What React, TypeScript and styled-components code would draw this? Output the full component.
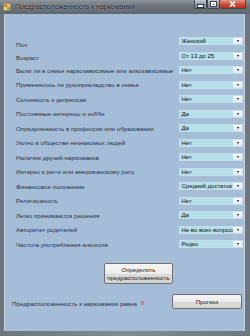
import React from 'react';
import styled, { createGlobalStyle } from 'styled-components';

const GlobalStyle = createGlobalStyle`
  html, body {
    margin: 0;
    padding: 0;
  }

  body {
    width: 250px;
    height: 336px;
    overflow: hidden;
    font-family: 'Liberation Sans', Arial, sans-serif;
  }
`;

interface Question {
  label: string;
  value: string;
  nudge?: number;
}

const questions: Question[] = [
  { label: 'Пол', value: 'Женский', nudge: 3.5 },
  { label: 'Возраст', value: 'От 13 до 25', nudge: 2 },
  { label: 'Были ли в семье наркозависимые или алкозависимые', value: 'Нет' },
  { label: 'Применялось ли рукоприкладство в семье', value: 'Нет' },
  { label: 'Склонность к депрессии', value: 'Нет' },
  { label: 'Постоянные интересы и хобби', value: 'Да' },
  { label: 'Определенность в профессии или образовании', value: 'Да' },
  { label: 'Уютно в обществе незнакомых людей', value: 'Нет' },
  { label: 'Наличие друзей-наркоманов', value: 'Нет' },
  { label: 'Интерес к регги или американскому рэпу', value: 'Нет' },
  { label: 'Финансовое положение', value: 'Средний достаток' },
  { label: 'Религиозность', value: 'Нет' },
  { label: 'Легко принимаются решения', value: 'Да' },
  { label: 'Авторитет родителей', value: 'Не во всех вопросах' },
  { label: 'Частота употребления алкоголя', value: 'Редко' },
];

const App = () => {
  return (
    <>
      <GlobalStyle />
      <Window>
        <TitleBar>
          <AppIcon viewBox='0 0 8 8'>
            <rect x='0.5' y='0.5' width='7' height='7' fill='#f3d36b' stroke='#9a7a2a' strokeWidth='0.6' />
            <rect x='1.5' y='1.5' width='2.5' height='2.5' fill='#e05a3a' />
            <rect x='4.2' y='4.2' width='2.5' height='2.5' fill='#4a8fd8' />
          </AppIcon>
          <Title>Предрасположенность к наркомании</Title>
          <Controls>
            <CaptionButton>
              <MinGlyph />
            </CaptionButton>
            <CaptionButton>
              <MaxGlyph />
            </CaptionButton>
            <CaptionButton close>
              <svg width='7' height='6' viewBox='0 0 7 6'>
                <path d='M1 0.5 L6 5.5 M6 0.5 L1 5.5' stroke='#fff' strokeWidth='1.6' />
              </svg>
            </CaptionButton>
          </Controls>
        </TitleBar>
        <Frame>
          <Client>
            <Form>
              {questions.map((q) => (
                <React.Fragment key={q.label}>
                  <Label nudge={q.nudge}>{q.label}</Label>
                  <Combo>
                    <ComboText>{q.value}</ComboText>
                    <ComboArrow />
                  </Combo>
                </React.Fragment>
              ))}
            </Form>
            <ActionRow>
              <PushButton width={69} height={21}>
                Определить
                <br />
                предрасположенность
              </PushButton>
            </ActionRow>
            <ResultRow>
              <ResultLabel>Предрасположенность к наркомании равна</ResultLabel>
              <ResultValue>0</ResultValue>
              <PushButton width={70} height={15} push>
                Прогноз
              </PushButton>
            </ResultRow>
          </Client>
        </Frame>
      </Window>
    </>
  );
};

export default App;

const Window = styled.div`
  display: flex;
  flex-direction: column;

  width: 250px;
  height: 336px;

  background: linear-gradient(90deg, #6c747d 0%, #838b94 50%, #6d757e 100%);
`;

const TitleBar = styled.div`
  display: flex;
  align-items: flex-start;

  height: 14px;

  background: linear-gradient(180deg, #8e959d 0%, #6c737b 45%, #5f676f 100%);
`;

const AppIcon = styled.svg`
  width: 8px;
  height: 8px;

  margin: 3px 0 0 3px;
`;

const Title = styled.div`
  margin: 3px 0 0 4px;

  color: #1c2026;
  font-size: 7px;
  line-height: 8px;
  white-space: nowrap;
  text-shadow: 0 0 2px rgba(220, 228, 236, 0.9);
`;

const Controls = styled.div`
  display: flex;

  margin-left: auto;
  margin-right: 4px;
`;

const CaptionButton = styled.div<{ close?: boolean }>`
  display: flex;
  align-items: center;
  justify-content: center;

  width: ${(props) => (props.close ? '26px' : '13px')};
  height: 9px;

  border: 1px solid #3f464e;
  border-top: 0;
  border-left-width: ${(props) => (props.close ? '0' : '1px')};
  border-radius: 0 0 2px 2px;
  box-sizing: border-box;

  background: ${(props) =>
    props.close
      ? 'linear-gradient(180deg, #e49a8c 0%, #c9503c 50%, #b8301e 100%)'
      : 'linear-gradient(180deg, #c6ccd3 0%, #8e98a3 50%, #7b8590 100%)'};
`;

const MinGlyph = styled.div`
  width: 5px;
  height: 2px;

  margin-top: 3px;

  background: #fff;
  border: 0.5px solid #333;
`;

const MaxGlyph = styled.div`
  width: 5px;
  height: 4px;

  border: 1px solid #fff;
  border-top-width: 2px;
  outline: 0.5px solid #444;
  box-sizing: border-box;
`;

const Frame = styled.div`
  display: flex;
  flex: 1;

  padding: 0 5px 5px 4px;
`;

const Client = styled.div`
  display: flex;
  flex-direction: column;
  flex: 1;

  padding-top: 19.75px;

  background: #a6bdd7;
  box-shadow: inset 1px 0 0 #c3d2e2, inset -1px 0 0 #c3d2e2;
`;

const Form = styled.div`
  display: grid;
  grid-template-columns: 1fr 64px;
  grid-auto-rows: 14.5px;
  align-items: center;

  padding: 0 2px 0 12px;
`;

const Label = styled.div<{ nudge?: number }>`
  margin-top: ${(props) => (props.nudge ? `${props.nudge * 2}px` : '0')};

  color: #26324a;
  font-size: 6.2px;
  line-height: 7px;
  white-space: nowrap;
`;

const Combo = styled.div`
  display: flex;

  height: 8px;

  border: 1px solid #c8dde6;
  box-sizing: border-box;
  background: #b3e0ea;
`;

const ComboText = styled.div`
  flex: 1;
  overflow: hidden;

  padding-left: 1.5px;

  color: #111;
  font-size: 6px;
  line-height: 6px;
  white-space: nowrap;
`;

const ComboArrow = styled.div`
  display: flex;
  align-items: center;
  justify-content: center;

  width: 9px;

  background: linear-gradient(180deg, #f7f9fa 0%, #e2e8ec 100%);

  &::after {
    content: '';

    border-top: 2px solid #000;
    border-left: 1.5px solid transparent;
    border-right: 1.5px solid transparent;
  }
`;

const ActionRow = styled.div`
  display: flex;

  margin-top: 11.75px;
  padding-left: 100px;
`;

const PushButton = styled.div<{ width: number; height: number; push?: boolean }>`
  display: flex;
  align-items: center;
  justify-content: center;

  width: ${(props) => props.width}px;
  height: ${(props) => props.height}px;
  margin-left: ${(props) => (props.push ? 'auto' : '0')};

  border: 1px solid #707070;
  border-radius: 2px;
  box-sizing: border-box;
  background: linear-gradient(180deg, #f5f5f5 0%, #ececec 50%, #dcdcdc 51%, #d2d2d2 100%);

  color: #1a1a1a;
  font-size: 6px;
  line-height: 8px;
  text-align: center;
  white-space: nowrap;
`;

const ResultRow = styled.div`
  display: flex;
  align-items: center;

  margin-top: 10px;
  padding: 0 3px 0 8px;
`;

const ResultLabel = styled.div`
  margin-top: 3px;

  color: #26324a;
  font-size: 6.2px;
  white-space: nowrap;
`;

const ResultValue = styled.div`
  margin: 2px 0 0 4px;

  color: #e0506e;
  font-size: 6px;
  font-weight: bold;
`;
